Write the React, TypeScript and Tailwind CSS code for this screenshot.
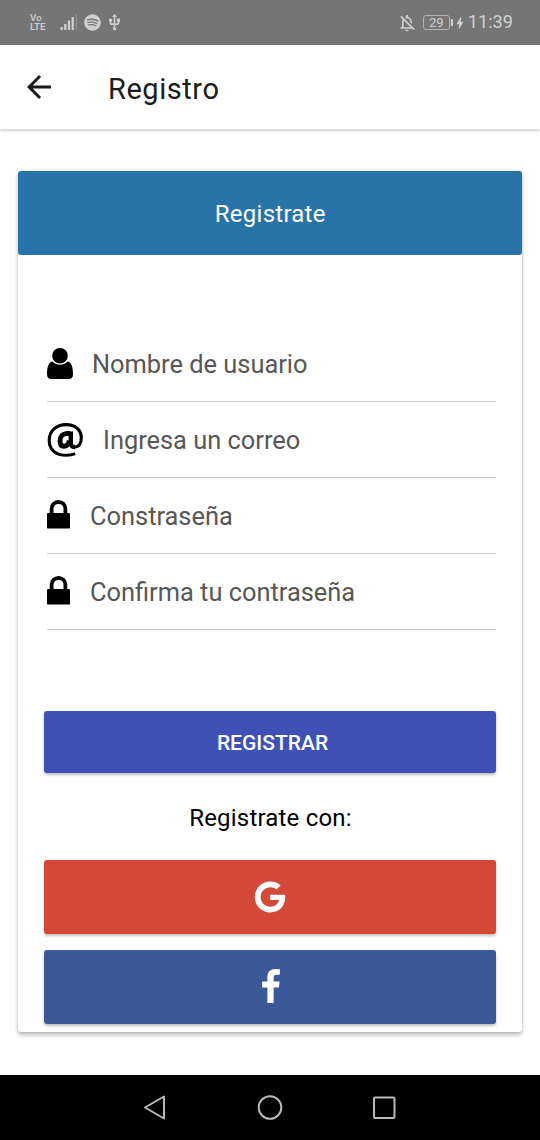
import type { ReactNode } from "react";
import { FaGoogle, FaSpotify } from "react-icons/fa";
import { MdArrowBack, MdBolt, MdOutlineNotificationsOff, MdUsb } from "react-icons/md";

function UserIcon() {
  return (
    <svg viewBox="0 0 26 31" className="-mr-px h-[31px] w-[26px] fill-black">
      <circle cx="13" cy="7.8" r="7.8" />
      <path d="M5.6 13.6C7.6 15.7 10.2 16.8 13 16.8C15.8 16.8 18.4 15.7 20.4 13.6C24.2 14 26 18.5 26 26.4C26 29.4 24.3 31 21.8 31H4.2C1.7 31 0 29.4 0 26.4C0 18.5 1.8 14 5.6 13.6z" />
    </svg>
  );
}

function LockIcon() {
  return (
    <svg viewBox="0 0 23 29" className="mb-0.5 h-[29px] w-[23px]">
      <path d="M4.6 14V9C4.6 4.9 7.6 2 11.5 2C15.4 2 18.4 4.9 18.4 9V14" className="fill-none stroke-black" strokeWidth="3.8" />
      <rect x="0" y="13" width="23" height="15.6" rx="1.2" />
    </svg>
  );
}

function AtIcon() {
  return (
    <svg viewBox="3 3 36 36" className="size-9 fill-none stroke-black">
      <path
        d="M31.2 34.6C28.4 35.8 25.8 36.3 22.3 36.3C11.7 36.3 5.2 30.6 5.2 21.4C5.2 11.8 12.3 5.6 22 5.6C31.4 5.6 37.3 10.9 37.3 18.8C37.3 24.6 34.6 28 30.8 28"
        strokeWidth="3.1"
      />
      <path
        d="M26 14.7C24.4 14.4 23 14.4 21.8 14.7C18.1 15.4 16 18 16 22C16 25.5 17.3 27.3 19.8 27.3C22.8 27.3 25 25.2 25.2 21.5"
        strokeWidth="4.9"
      />
      <path d="M26.8 12.6V23.6C26.8 26.8 28 28.2 31 28" strokeWidth="4.4" />
    </svg>
  );
}

function Field({ icon, label }: { icon: ReactNode; label: string }) {
  return (
    <div className="flex h-[76px] items-center gap-5 border-b border-[#cfcfcf]">
      {icon}
      <span className="text-[25.4px] leading-8 whitespace-nowrap text-[#575757]">{label}</span>
    </div>
  );
}

function StatusBar() {
  return (
    <div className="flex h-[45px] items-center bg-[#757575] pr-[27px] pl-[30px] text-[#d0d0d0]">
      <div className="w-[17px] pb-px text-[9.8px] font-medium">
        <div className="h-[9px] leading-[9px]">Vo</div>
        <div className="h-[9px] leading-[9px]">LTE</div>
      </div>
      <svg viewBox="0 0 18 18" className="mb-px ml-[13px] h-[18px] w-[18px] fill-current">
        <path d="M0.5 14h2.2v3H.5zM4.2 11h2.2v6H4.2zM7.9 7.5h2.2V17H7.9zM11.6 4h2.2v13h-2.2z" />
        <path d="M15.8 1h1.2v16h-1.2z" opacity=".3" />
      </svg>
      <FaSpotify className="ml-[6px] size-[17px]" />
      <MdUsb className="ml-[4px] size-[19px]" />
      <MdOutlineNotificationsOff className="ml-auto size-[20px]" />
      <div className="ml-[6px] flex h-[15px] w-[27px] items-center justify-center rounded-[3px] border border-[#b4b4b4] text-[13px] leading-none">
        29
      </div>
      <div className="ml-px h-[7px] w-[2px] bg-current" />
      <MdBolt className="-ml-px size-4" />
      <span className="text-[18.2px] leading-none">11:39</span>
    </div>
  );
}

export default function App() {
  return (
    <div className="flex h-[1140px] w-[540px] flex-col bg-white font-[Roboto,sans-serif]">
      <StatusBar />
      <header className="relative flex h-[84px] items-center bg-white pl-[21px] shadow-[0_2px_2px_rgba(0,0,0,0.12),0_4px_2px_rgba(0,0,0,0.03)]">
        <MdArrowBack className="size-9 text-[#1c1c1c]" />
        <h1 className="mt-1 ml-[51px] text-[29px] leading-9 tracking-[0.55px] text-[#1c1c1c]">Registro</h1>
      </header>

      <main className="flex-1 px-[18px] pt-[42px]">
        <section className="h-[861px] w-[503.5px] rounded-[3px] bg-white shadow-[0_3px_4px_rgba(0,0,0,0.26),0_0_2px_rgba(0,0,0,0.15)]">
          <div className="flex h-[84px] items-center justify-center rounded-[3px] bg-[#2874a8] pt-0.5 pl-px text-[24px] tracking-[0.25px] text-white">
            Registrate
          </div>
          <form className="pt-[71px] pr-[25.5px] pl-[29px]">
            <Field icon={<UserIcon />} label="Nombre de usuario" />
            <Field icon={<AtIcon />} label="Ingresa un correo" />
            <Field icon={<LockIcon />} label="Constraseña" />
            <Field icon={<LockIcon />} label="Confirma tu contraseña" />
          </form>
          <div className="flex flex-col pt-[80.5px] pr-[25.5px] pl-[26px]">
            <button className="h-[62.5px] rounded-[3px] bg-[#3f51b5] pt-[3px] pl-[5px] text-[21px] font-medium text-white shadow-[0_2px_3px_rgba(0,0,0,0.25)]">
              REGISTRAR
            </button>
            <p className="mt-[29px] pl-px text-center text-[24px] leading-8 tracking-[0.2px] text-black">Registrate con:</p>
            <button className="mt-[26px] flex h-[74px] items-center justify-center rounded-[3px] bg-[#d34836] pr-px text-white shadow-[0_2px_3px_rgba(0,0,0,0.25)]">
              <FaGoogle className="size-8" />
            </button>
            <button className="mt-4 flex h-[74px] items-center justify-center rounded-[3px] bg-[#3b5998] text-white shadow-[0_2px_3px_rgba(0,0,0,0.25)]">
              <svg viewBox="479 0 864 1664" className="mb-[3px] ml-px h-[34px] w-[18px] fill-white">
                <path d="M1343 12v264h-157q-86 0-116 36t-30 108v189h293l-39 296h-254v759h-306v-759h-255v-296h255v-218q0-186 104-288.5t277-102.5q147 0 228 12z" />
              </svg>
            </button>
          </div>
        </section>
      </main>

      <nav className="flex h-[65px] items-center bg-black pl-[143px]">
        <svg viewBox="0 0 24 26" className="h-[26px] w-6 fill-none stroke-[#b8b8b8] stroke-2">
          <path d="M21 1.5v22L2 12.5z" strokeLinejoin="round" />
        </svg>
        <svg viewBox="0 0 26 26" className="ml-[90px] size-[26px] fill-none stroke-[#b8b8b8] stroke-2">
          <circle cx="13" cy="12.5" r="11.3" />
        </svg>
        <svg viewBox="0 0 24 24" className="ml-[89px] size-6 fill-none stroke-[#b8b8b8] stroke-2">
          <rect x="2" y="1.5" width="20.5" height="20.5" rx="1" />
        </svg>
      </nav>
    </div>
  );
}
